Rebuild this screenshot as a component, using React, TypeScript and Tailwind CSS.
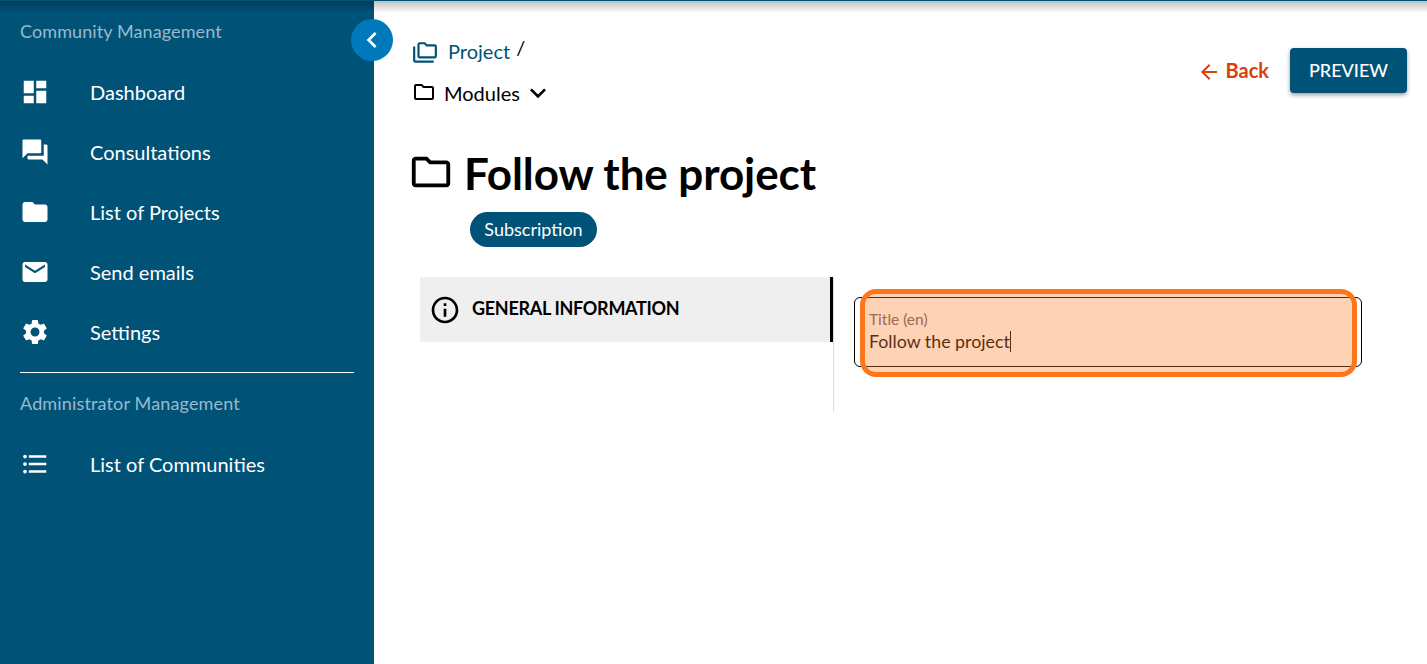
import React from "react";

const paths = {
  dashboard: "M3 13h8V3H3v10zm0 8h8v-6H3v6zm10 0h8V11h-8v10zm0-18v6h8V3h-8z",
  forum:
    "M21 6h-2v9H6v2c0 .55.45 1 1 1h11l4 4V7c0-.55-.45-1-1-1zm-4 6V3c0-.55-.45-1-1-1H3c-.55 0-1 .45-1 1v14l4-4h10c.55 0 1-.45 1-1z",
  folder:
    "M10 4H4c-1.1 0-1.99.9-1.99 2L2 18c0 1.1.9 2 2 2h16c1.1 0 2-.9 2-2V8c0-1.1-.9-2-2-2h-8l-2-2z",
  email:
    "M20 4H4c-1.1 0-1.99.9-1.99 2L2 18c0 1.1.9 2 2 2h16c1.1 0 2-.9 2-2V6c0-1.1-.9-2-2-2zm0 4l-8 5-8-5V6l8 5 8-5v2z",
  settings:
    "M19.14 12.94c.04-.3.06-.61.06-.94 0-.32-.02-.64-.07-.94l2.03-1.58c.18-.14.23-.41.12-.61l-1.92-3.32c-.12-.22-.37-.29-.59-.22l-2.39.96c-.5-.38-1.03-.7-1.62-.94l-.36-2.54c-.04-.24-.24-.41-.48-.41h-3.84c-.24 0-.43.17-.47.41l-.36 2.54c-.59.24-1.13.57-1.62.94l-2.39-.96c-.22-.08-.47 0-.59.22L2.74 8.87c-.12.21-.08.47.12.61l2.03 1.58c-.05.3-.09.63-.09.94s.02.64.07.94l-2.03 1.58c-.18.14-.23.41-.12.61l1.92 3.32c.12.22.37.29.59.22l2.39-.96c.5.38 1.03.7 1.62.94l.36 2.54c.05.24.24.41.48.41h3.84c.24 0 .44-.17.47-.41l.36-2.54c.59-.24 1.13-.56 1.62-.94l2.39.96c.22.08.47 0 .59-.22l1.92-3.32c.12-.22.07-.47-.12-.61l-2.01-1.58zM12 15.6c-1.98 0-3.6-1.62-3.6-3.6s1.62-3.6 3.6-3.6 3.6 1.62 3.6 3.6-1.62 3.6-3.6 3.6z",
  list:
    "M4 10.5c-.83 0-1.5.67-1.5 1.5s.67 1.5 1.5 1.5 1.5-.67 1.5-1.5-.67-1.5-1.5-1.5zm0-6c-.83 0-1.5.67-1.5 1.5S3.17 7.5 4 7.5 5.5 6.83 5.5 6 4.83 4.5 4 4.5zm0 12c-.83 0-1.5.68-1.5 1.5s.68 1.5 1.5 1.5 1.5-.68 1.5-1.5-.67-1.5-1.5-1.5zM7 19h14v-2H7v2zm0-6h14v-2H7v2zm0-8v2h14V5H7z",
  folderOutline:
    "M9.17 6l2 2H20v10H4V6h5.17M10 4H4c-1.1 0-1.99.9-1.99 2L2 18c0 1.1.9 2 2 2h16c1.1 0 2-.9 2-2V8c0-1.1-.9-2-2-2h-8l-2-2z",
  folderCopy:
    "M3 19h17v2H3c-1.1 0-2-.9-2-2V6h2v13zM23 6v9c0 1.1-.9 2-2 2H7c-1.1 0-2-.9-2-2l.01-11c0-1.1.89-2 1.99-2h5l2 2h7c1.1 0 2 .9 2 2zM7 15h14V6h-7.83l-2-2H7v11z",
  chevronDown: "M16.59 8.59 12 13.17 7.41 8.59 6 10l6 6 6-6z",
  chevronLeft: "M15.41 7.41 14 6l-6 6 6 6 1.41-1.41L10.83 12z",
  arrowBack: "M20 11H7.83l5.59-5.59L12 4l-8 8 8 8 1.41-1.41L7.83 13H20v-2z",
  info:
    "M11 7h2v2h-2zm0 4h2v6h-2zm1-9C6.48 2 2 6.48 2 12s4.48 10 10 10 10-4.48 10-10S17.52 2 12 2zm0 18c-4.41 0-8-3.59-8-8s3.59-8 8-8 8 3.59 8 8-3.59 8-8 8z",
};

const Icon = ({ d, className }: { d: string; className: string }) => (
  <svg viewBox="0 0 24 24" fill="currentColor" className={className}>
    <path d={d} />
  </svg>
);

const NavItem = ({ d, label }: { d: string; label: string }) => (
  <div className="flex h-[60px] items-center pl-[20px]">
    <Icon d={d} className="w-[30px] h-[30px] text-white" />
    <span className="ml-[40px] text-[20px] text-white">{label}</span>
  </div>
);

const App = () => {
  return (
    <div className="relative flex h-[664px] w-[1427px] overflow-hidden bg-white font-['Lato','Noto_Sans',sans-serif]">
      {/* app bar sits off screen, only its line and shadow show */}
      <div className="absolute inset-x-0 top-0 z-20 h-[13px] border-t border-[#005277] bg-gradient-to-b from-black/25 to-transparent" />

      <aside className="relative z-10 w-[374px] shrink-0 bg-[#005277]">
        <p className="px-[20px] pt-[19px] text-[18px] leading-[25px] tracking-[0.1px] text-[#99bacb]">
          Community Management
        </p>
        <div className="mt-[18px]">
          <NavItem d={paths.dashboard} label="Dashboard" />
          <NavItem d={paths.forum} label="Consultations" />
          <NavItem d={paths.folder} label="List of Projects" />
          <NavItem d={paths.email} label="Send emails" />
          <NavItem d={paths.settings} label="Settings" />
        </div>
        <div className="mx-[20px] mt-[10px] h-[1px] bg-white" />
        <p className="px-[20px] pt-[18px] text-[18px] leading-[25px] tracking-[0.15px] text-[#99bacb]">
          Administrator Management
        </p>
        <div className="mt-[18px]">
          <NavItem d={paths.list} label="List of Communities" />
        </div>
        <button className="absolute right-[-19px] top-[19px] flex h-[42px] w-[42px] items-center justify-center rounded-full bg-[#0079bc] text-white">
          <Icon d={paths.chevronLeft} className="w-[32px] h-[32px]" />
        </button>
      </aside>

      <main className="flex-1 min-w-0 pl-[37px] pr-[20px]">
        <div className="flex justify-between">
          <div>
            <div className="mt-[30px] flex h-[42px] items-center text-[20px] text-[#005277]">
              <Icon d={paths.folderCopy} className="ml-[1px] w-[26px] h-[26px] mt-[4px]" />
              <span className="ml-[10px]">Project</span>
              <span className="ml-[6px] mb-[8px] text-[20px] text-black">/</span>
            </div>
            <div className="mt-[9px] flex h-[24px] items-center text-[20px] text-black">
              <Icon d={paths.folderOutline} className="w-[24px] h-[24px] ml-[1px] -mt-[2px]" />
              <span className="ml-[8px]">Modules</span>
              <Icon d={paths.chevronDown} className="w-[32px] h-[32px] ml-[2px]" />
            </div>
          </div>
          <div className="flex items-start gap-[21px] pt-[48px]">
            <div className="flex h-[43px] items-center text-[20px] font-bold text-[#d9400b]">
              <Icon d={paths.arrowBack} className="w-[24px] h-[24px] mt-[4px] mr-[5px]" />
              Back
            </div>
            <button className="h-[45px] w-[117px] rounded-[4px] bg-[#005277] text-[18px] font-medium text-white shadow-[0_2px_4px_rgba(0,0,0,0.4)]">
              PREVIEW
            </button>
          </div>
        </div>

        <div className="mt-[40px] flex items-center">
          <Icon d={paths.folderOutline} className="w-[46px] h-[46px] -ml-[3px] -mt-[2px] text-black" />
          <h1 className="ml-[10px] text-[44px] font-bold leading-[56px] tracking-[-0.1px] text-black">
            Follow the project
          </h1>
        </div>
        <div className="mt-[11px] ml-[59px] flex h-[35px] w-[127px] items-center justify-center rounded-full bg-[#005277] text-[18px] text-white">
          Subscription
        </div>

        <div className="mt-[30px] ml-[9px] flex">
          <div className="w-[414px] h-[135px] border-r border-[#dddddd]">
            <div className="flex h-[65px] items-center border-r-[3px] border-black bg-[#efefef] pl-[9px]">
              <Icon d={paths.info} className="w-[32px] h-[32px] text-black" />
              <span className="ml-[11px] -mt-[2px] text-[18px] font-bold tracking-[-0.3px] text-black">
                GENERAL INFORMATION
              </span>
            </div>
          </div>
          <div className="ml-[20px] mt-[20px] flex h-[70px] w-[508px] flex-col justify-center rounded-[6px] border border-black px-[14px]">
            <span className="text-[15.5px] leading-[18px] text-[#5f6368]">Title (en)</span>
            <span className="flex items-center text-[17.8px] leading-[26px] text-black">
              Follow the project
              <span className="h-[21px] w-[1px] bg-black" />
            </span>
          </div>
        </div>
      </main>

      <div className="absolute left-[860px] top-[289px] z-30 h-[88px] w-[497px] rounded-[16px] border-[5px] border-[#fd761b] bg-[#fb7f2b]/35" />
    </div>
  );
};

export default App;
